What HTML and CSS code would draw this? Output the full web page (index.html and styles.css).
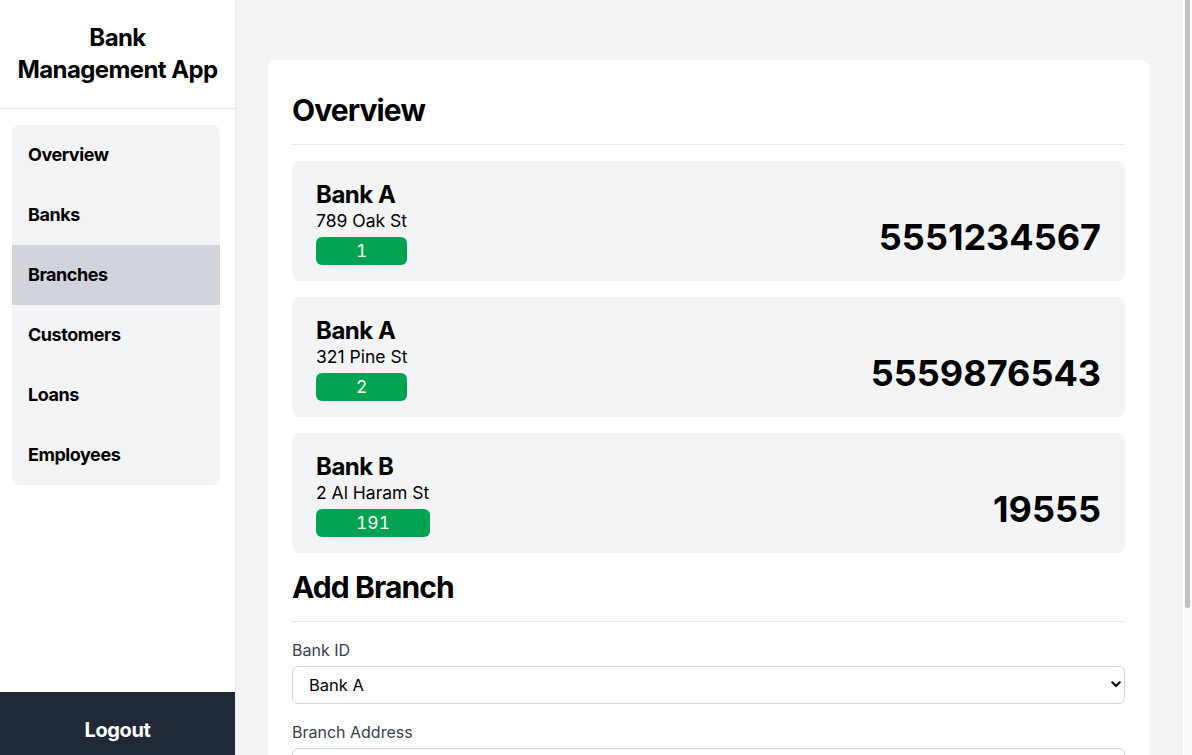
FILE: index.html
```html
<!DOCTYPE html>
<html lang="en">
<head>
<meta charset="utf-8">
<title>Bank Management App</title>
<link rel="stylesheet" href="styles.css">
</head>
<body>
<div class="app">
  <aside class="sidebar">
    <div class="brand">Bank<br>Management App</div>
    <nav class="nav">
      <a class="nav-item">Overview</a>
      <a class="nav-item">Banks</a>
      <a class="nav-item active">Branches</a>
      <a class="nav-item">Customers</a>
      <a class="nav-item">Loans</a>
      <a class="nav-item">Employees</a>
    </nav>
    <div class="spacer"></div>
    <a class="logout">Logout</a>
  </aside>
  <main class="main">
    <section class="panel">
      <h2 class="section-title">Overview</h2>
      <div class="branch-list">
        <div class="branch">
          <div class="branch-info">
            <div class="branch-bank">Bank A</div>
            <div class="branch-addr">789 Oak St</div>
            <span class="badge">1</span>
          </div>
          <div class="branch-phone">5551234567</div>
        </div>
        <div class="branch">
          <div class="branch-info">
            <div class="branch-bank">Bank A</div>
            <div class="branch-addr">321 Pine St</div>
            <span class="badge">2</span>
          </div>
          <div class="branch-phone">5559876543</div>
        </div>
        <div class="branch">
          <div class="branch-info">
            <div class="branch-bank">Bank B</div>
            <div class="branch-addr">2 Al Haram St</div>
            <span class="badge">191</span>
          </div>
          <div class="branch-phone">19555</div>
        </div>
      </div>
      <h2 class="section-title form-title">Add Branch</h2>
      <form class="form">
        <label class="field">
          <span class="label">Bank ID</span>
          <span class="select-wrap">
            <select class="control select">
              <option>Bank A</option>
              <option>Bank B</option>
            </select>
            <svg class="chevron" width="10" height="7" viewBox="0 0 10 7"><path d="M1.3 1.3 L5 5 L8.7 1.3" fill="none" stroke="#111" stroke-width="2.2" stroke-linecap="round" stroke-linejoin="round"/></svg>
          </span>
        </label>
        <label class="field">
          <span class="label">Branch Address</span>
          <input class="control" type="text">
        </label>
        <label class="field">
          <span class="label">Phone Number</span>
          <input class="control" type="text">
        </label>
        <button class="submit" type="button">Add Branch</button>
      </form>
    </section>
  </main>
  <div class="scrollbar" aria-hidden="true"><div class="scroll-thumb"></div></div>
</div>
</body>
</html>
```

FILE: styles.css
```css
* { box-sizing: border-box; }
html, body { margin: 0; height: 100%; }
body {
  font-family: Inter, "Noto Sans", "Liberation Sans", sans-serif;
  color: #000;
  background: #f3f4f6;
}
.app {
  display: flex;
  height: 100vh;
}
.sidebar {
  width: 236px;
  flex: none;
  background: #fff;
  border-right: 1px solid #e5e7eb;
  display: flex;
  flex-direction: column;
}
.brand {
  padding: 22px 8px;
  height: 109px;
  border-bottom: 1px solid #e5e7eb;
  text-align: center;
  font-size: 24px;
  line-height: 32px;
  font-weight: 700;
  letter-spacing: -0.025em;
}
.nav {
  margin: 16px 0 0 12px;
  width: 208px;
  background: #f3f4f6;
  border-radius: 8px;
  overflow: hidden;
  display: flex;
  flex-direction: column;
}
.nav-item {
  height: 60px;
  display: flex;
  align-items: center;
  padding: 0 16px 2px;
  font-size: 18px;
  font-weight: 700;
  letter-spacing: -0.025em;
  color: #000;
}
.nav-item.active { background: #d1d5db; }
.spacer { flex: 1; }
.logout {
  height: 63px;
  padding-top: 24px;
  background: #1f2937;
  color: #fff;
  text-align: center;
  font-size: 20px;
  line-height: 28px;
  font-weight: 700;
  letter-spacing: -0.02em;
}
.main {
  flex: 1;
  overflow: hidden;
  padding: 60px 32px 40px;
}
.scrollbar {
  width: 11px;
  flex: none;
  background: #fafafa;
  border-left: 1px solid #e8e8e8;
  padding: 0 2px 0 3px;
}
.scroll-thumb {
  height: 608px;
  background: #c1c1c1;
  border-radius: 0 0 3px 3px;
}
.panel {
  background: #fff;
  border-radius: 8px;
  padding: 32px 24px 24px;
}
.section-title {
  margin: 0;
  font-size: 30px;
  line-height: 36px;
  font-weight: 700;
  letter-spacing: -0.03em;
  padding-bottom: 16px;
  border-bottom: 1px solid #e5e7eb;
}
.branch-list {
  margin-top: 16px;
  display: flex;
  flex-direction: column;
  gap: 16px;
}
.branch {
  background: #f3f4f6;
  border-radius: 8px;
  padding: 16px 24px;
  display: flex;
  justify-content: space-between;
  align-items: flex-end;
}
.branch-info { display: flex; flex-direction: column; align-items: flex-start; }
.branch-bank { font-size: 24px; line-height: 32px; font-weight: 700; letter-spacing: -0.02em; padding-top: 2px; margin-bottom: -2px; }
.branch-addr { font-size: 17.5px; line-height: 24px; }
.badge {
  margin-top: 4px;
  background: #00a34f;
  color: #fff;
  border-radius: 6px;
  padding: 0 40px;
  height: 28px;
  line-height: 28px;
  font-size: 17.5px;
  font-variant-numeric: tabular-nums;
}
.branch-phone {
  font-size: 36px;
  line-height: 36px;
  font-weight: 700;
  margin-bottom: 10px;
}
.form-title { margin-top: 16px; }
.form { display: flex; flex-direction: column; gap: 16px; margin-top: 16px; }
.field { display: flex; flex-direction: column; gap: 4px; }
.label { font-size: 16px; line-height: 24px; color: #374151; }
.select-wrap { position: relative; display: block; }
.control {
  width: 100%;
  height: 38px;
  border: 1px solid #d1d5db;
  border-radius: 6px;
  background: #fff;
  font-family: inherit;
  font-size: 16.5px;
  color: #000;
  padding: 0 16px;
}
.select { appearance: none; -webkit-appearance: none; }
.chevron { position: absolute; right: 4px; top: 15px; pointer-events: none; }
.submit {
  align-self: flex-start;
  background: #1f2937;
  color: #fff;
  border: 0;
  border-radius: 6px;
  font-family: inherit;
  font-size: 16px;
  font-weight: 600;
  padding: 10px 20px;
}
```
